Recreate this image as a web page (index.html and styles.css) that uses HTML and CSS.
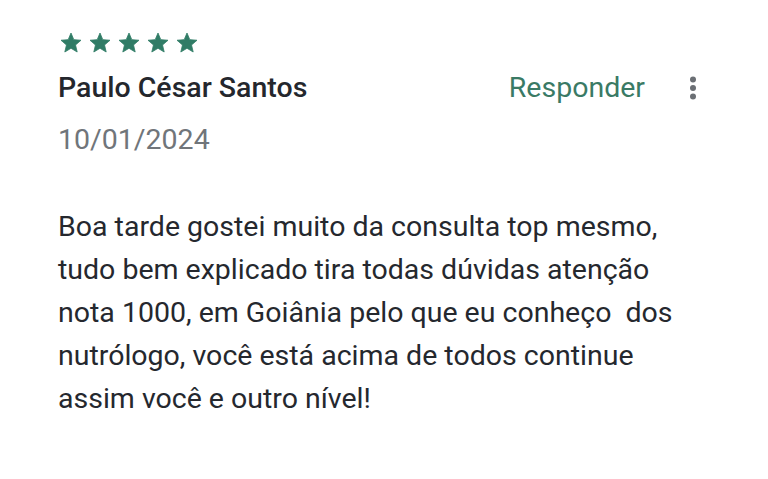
FILE: index.html
```html
<!DOCTYPE html>
<html lang="pt">
<head>
<meta charset="utf-8">
<link rel="stylesheet" href="styles.css">
</head>
<body>
<div class="review">
  <div class="stars">
    <svg class="star" viewBox="0 0 24 24"><path d="M12 17.27L18.18 21l-1.64-7.03L22 9.24l-7.19-.61L12 2 9.19 8.63 2 9.24l5.46 4.73L5.82 21z"/></svg>
    <svg class="star" viewBox="0 0 24 24"><path d="M12 17.27L18.18 21l-1.64-7.03L22 9.24l-7.19-.61L12 2 9.19 8.63 2 9.24l5.46 4.73L5.82 21z"/></svg>
    <svg class="star" viewBox="0 0 24 24"><path d="M12 17.27L18.18 21l-1.64-7.03L22 9.24l-7.19-.61L12 2 9.19 8.63 2 9.24l5.46 4.73L5.82 21z"/></svg>
    <svg class="star" viewBox="0 0 24 24"><path d="M12 17.27L18.18 21l-1.64-7.03L22 9.24l-7.19-.61L12 2 9.19 8.63 2 9.24l5.46 4.73L5.82 21z"/></svg>
    <svg class="star" viewBox="0 0 24 24"><path d="M12 17.27L18.18 21l-1.64-7.03L22 9.24l-7.19-.61L12 2 9.19 8.63 2 9.24l5.46 4.73L5.82 21z"/></svg>
  </div>
  <div class="header">
    <div class="name">Paulo César Santos</div>
    <div class="actions">
      <span class="reply">Responder</span>
      <svg class="more" viewBox="0 0 8 24"><circle cx="4" cy="3.4" r="3"/><circle cx="4" cy="12" r="3"/><circle cx="4" cy="20.6" r="3"/></svg>
    </div>
  </div>
  <div class="date">10/01/2024</div>
  <p class="text">Boa tarde gostei muito da consulta top mesmo,<br>tudo bem explicado tira todas dúvidas atenção<br>nota 1000, em Goiânia pelo que eu conheço&nbsp; dos<br>nutrólogo, você está acima de todos continue<br>assim você e outro nível!</p>
</div>
</body>
</html>
```

FILE: styles.css
```css
html, body {
  margin: 0;
  padding: 0;
  background: #ffffff;
}
body {
  width: 768px;
  height: 479px;
  overflow: hidden;
  font-family: Roboto, "Noto Sans", sans-serif;
}
.review {
  padding: 31px 0 0 58px;
}
.stars {
  display: flex;
  gap: 5px;
  margin-left: 1px;
}
.star {
  width: 24px;
  height: 24px;
  fill: #307c66;
  stroke: #307c66;
  stroke-width: 0.8;
  stroke-linejoin: round;
}
.header {
  display: flex;
  align-items: center;
  justify-content: space-between;
  margin-top: 15px;
  padding-right: 71px;
}
.name {
  font-size: 28.5px;
  font-weight: 500;
  color: #24272d;
  line-height: 36px;
}
.actions {
  display: flex;
  align-items: center;
  gap: 44px;
}
.reply {
  font-size: 28.5px;
  color: #3a7a65;
  line-height: 36px;
}
.more {
  width: 8px;
  height: 24px;
  fill: #6b6f74;
}
.date {
  margin-top: 16px;
  font-size: 28.5px;
  color: #70757a;
  line-height: 36px;
}
.text {
  margin: 47px 0 0;
  font-size: 28.5px;
  line-height: 43px;
  color: #25282e;
}
```
